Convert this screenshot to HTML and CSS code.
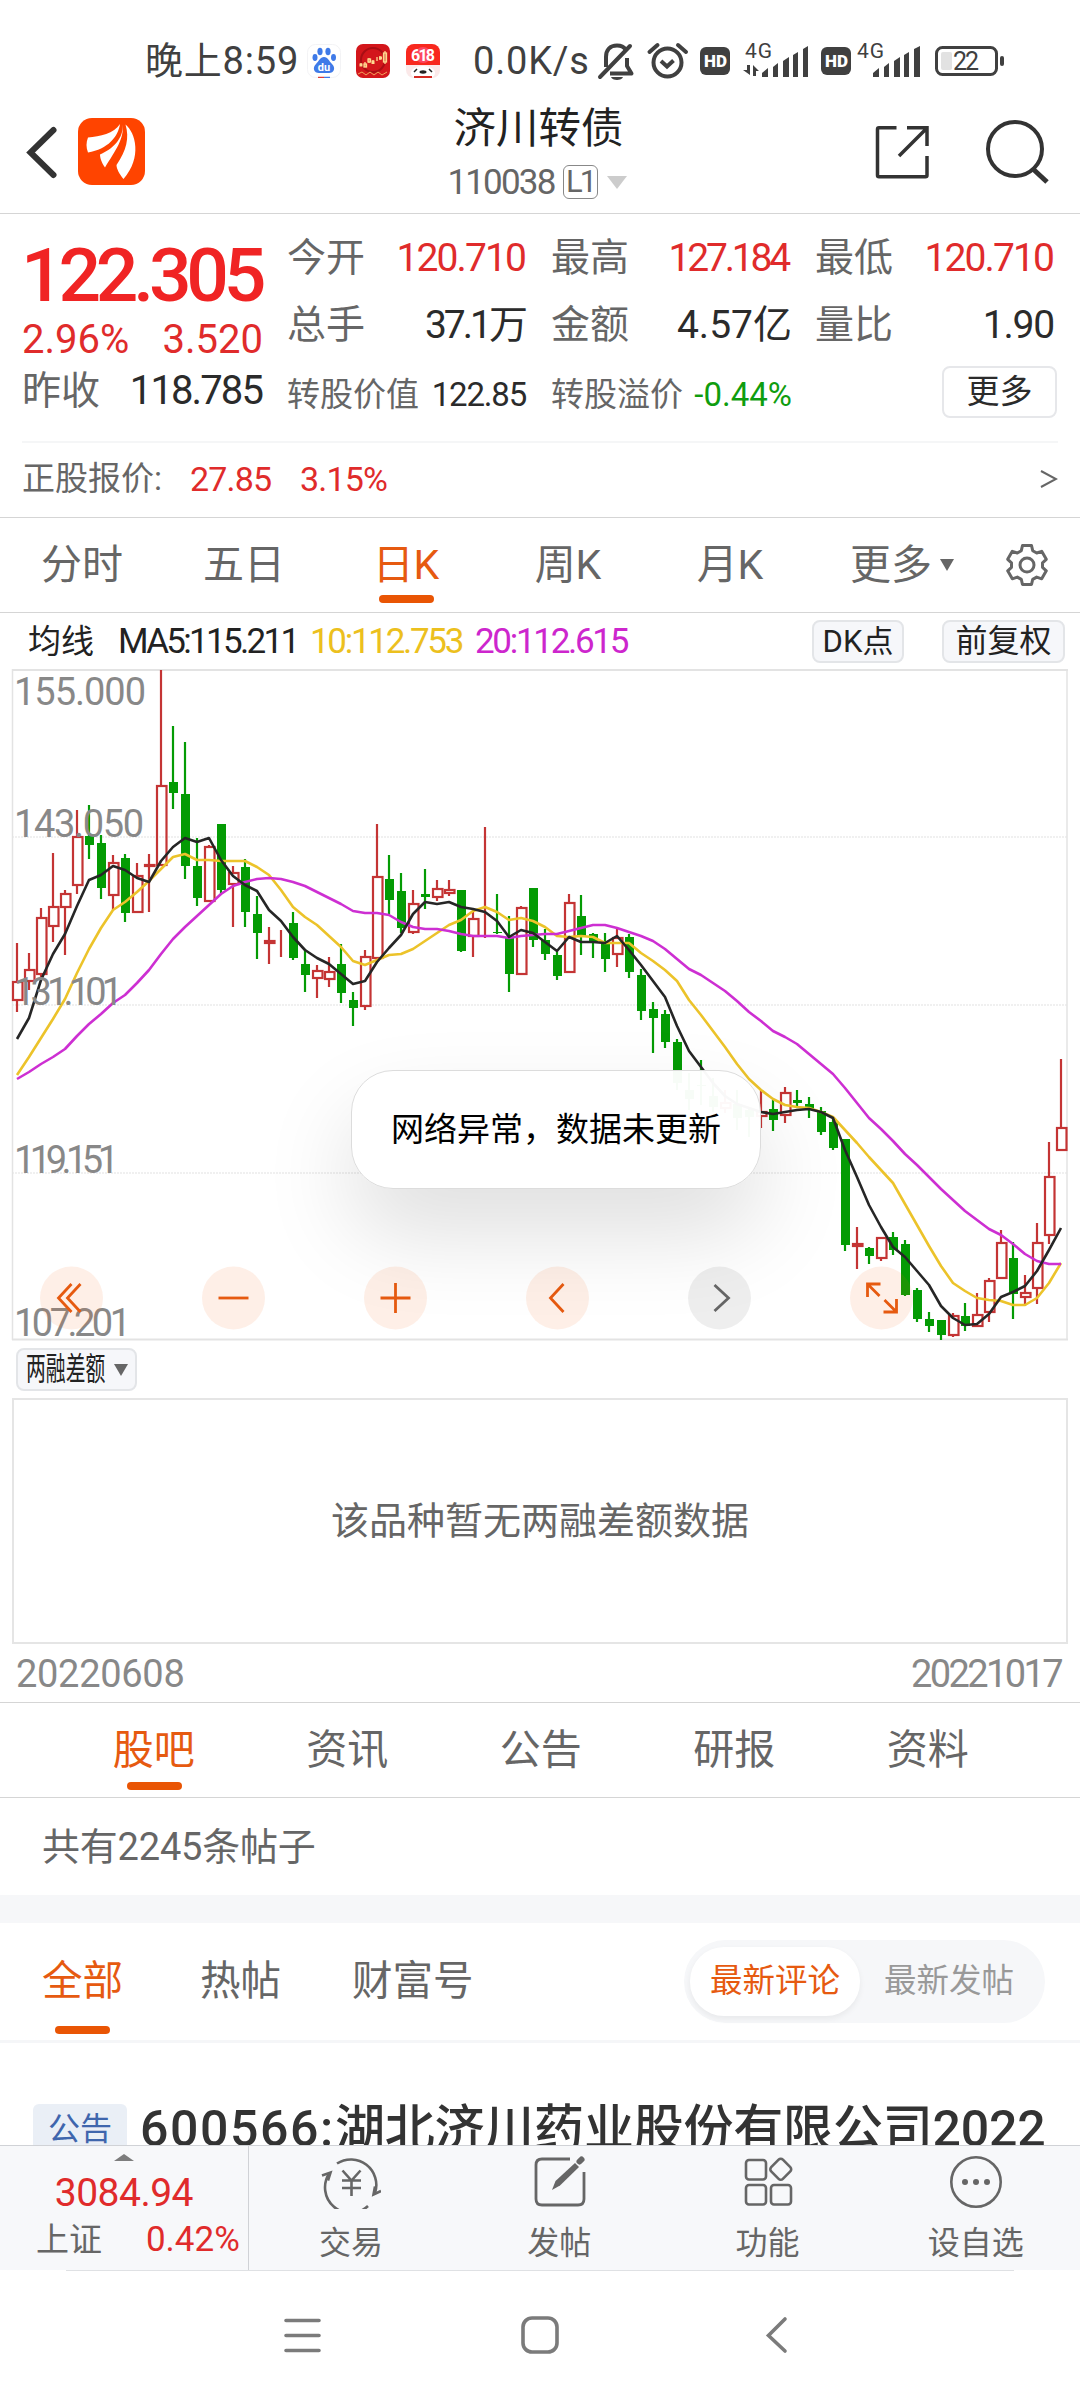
FILE: index.html
```html
<!DOCTYPE html>
<html lang="zh-CN">
<head>
<meta charset="utf-8">
<title>济川转债 110038</title>
<link rel="stylesheet" href="styles.css">
</head>
<body>
<div class="statusbar">
  <span class="clock">晚上8:59</span>
  <svg class="app-baidu" width="34" height="34" viewBox="0 0 34 34"><rect x=".5" y=".5" width="33" height="33" rx="8" fill="#fff" stroke="#f3f3f5"/><g fill="#3f7ae8"><ellipse cx="13" cy="7.500" rx="2.600" ry="3.700"/><ellipse cx="21" cy="7.500" rx="2.600" ry="3.700"/><ellipse cx="8" cy="13.500" rx="2.500" ry="3.400"/><ellipse cx="26.500" cy="13.500" rx="2.500" ry="3.400"/><path d="M17 13c4 0 5 4 8 7 4 4 2 9-3 9H12c-5 0-7-5-3-9 3-3 4-7 8-7z"/></g><text x="17" y="27" text-anchor="middle" font-size="11" font-weight="700" fill="#fff">du</text><path d="M11 33.500h6" stroke="#e03c35" stroke-width="1.500"/><path d="M17 33.500h6" stroke="#3f7ae8" stroke-width="1.500"/></svg>
  <svg class="app-stock" width="34" height="34" viewBox="0 0 34 34"><rect width="34" height="34" rx="7" fill="#d3161b"/><circle cx="17" cy="16" r="12" fill="none" stroke="#a90e14" stroke-width="2"/><g stroke="#ffd890" stroke-width="1.300" fill="none"><path d="M5 19v3M9 18v5M13 14v5M17 16v4M21 13v4M24 12v4M29 7v13"/><rect x="8" y="20" width="2.500" height="3"/><rect x="12" y="15" width="2.500" height="3"/><rect x="27.500" y="9" width="3" height="9"/></g><g fill="#ffd890"><rect x="3.500" y="19.500" width="3" height="3"/><rect x="15.500" y="16.500" width="3" height="3.500"/><rect x="23" y="12.500" width="3" height="3"/></g><path d="M2 30l4-2 4 3 4-3 4 3 4-3 4 3 5-3" stroke="#f2a25b" fill="none"/></svg>
  <svg class="app-618" width="34" height="34" viewBox="0 0 34 34"><rect width="34" height="34" rx="8" fill="#fbe9e9"/><path d="M8 0h18a8 8 0 0 1 8 8v13H0V8a8 8 0 0 1 8-8z" fill="#f8281e"/><circle cx="17" cy="11" r="8" fill="#ff5b8c" fill-opacity=".6"/><text x="17" y="17" text-anchor="middle" font-size="16" font-weight="700" fill="#fff" textLength="24">618</text><ellipse cx="17" cy="29" rx="12" ry="7" fill="#fff"/><path d="M8 28l3-3M26 28l-3-3" stroke="#222" stroke-width="1.500"/><ellipse cx="17" cy="28" rx="3.500" ry="1.700" fill="#222"/><path d="M8 32h18v2H8z" fill="#d42a22"/></svg>
  <span class="speed">0.0K/s</span>
  <svg class="status-icons" width="410" height="44" viewBox="596 38 410 44">
    <g fill="none" stroke="#404040" stroke-width="4">
      <path d="M606 66V56c0-7 4-11.500 11-11.500 4 0 7 1.500 8.500 4M627 57v8l4.500 7.500H610" stroke-linejoin="round"/>
      <path d="M600 76l30-31" stroke-linecap="round"/>
      <circle cx="667.500" cy="61.500" r="14"/>
      <path d="M661 60l6 5.500 6.500-6"/>
      <path d="M649.500 51l8-7M686 51l-8-7" stroke-linecap="round"/>
    </g>
    <path d="M611 76h12c-1 4-11 4-12 0z" fill="#404040"/>
    <g fill="#404040">
      <rect x="700" y="46" width="30" height="28" rx="6"/><rect x="821" y="46" width="30" height="28" rx="6"/>
      <path d="M747 64h3v10l-7-5h4zM753 75V64l6 6h-3v5z"/>
      <path d="M762 76v-4l6-5v9zM773 76V66l5-4v14zM783 76V60l6-4v20zM793 76V54l5-3v25zM803 76V48l5-3v31z"/>
      <path d="M873 76v-4l6-5v9zM884 76V66l5-4v14zM894 76V60l6-4v20zM904 76V54l5-3v25zM914 76V48l6-3v31z"/>
      <rect x="1000" y="55" width="4" height="10" rx="2"/>
    </g>
    <rect x="941" y="51" width="11" height="18" rx="2" fill="#e2e2e2"/>
    <rect x="936.500" y="46.500" width="60" height="27" rx="6" fill="none" stroke="#404040" stroke-width="3"/>
    <g font-size="17" font-weight="900" fill="#fff" text-anchor="middle"><text x="715.500" y="66">HD</text><text x="836.500" y="66">HD</text></g>
    <g font-size="21" fill="#404040"><text x="745" y="57" textLength="27">4G</text><text x="857" y="57" textLength="27">4G</text><text x="966" y="69" font-size="25" text-anchor="middle" textLength="26">22</text></g>
  </svg>
</div>

<header class="header">
  <svg class="back" width="32" height="56" viewBox="26 123 32 56"><path d="M53.500 129L30.500 151.500 53.500 174" fill="none" stroke="#333" stroke-width="6" stroke-linecap="round"/></svg>
  <svg class="logo" width="67" height="67" viewBox="78 119 67 67"><rect x="78" y="119" width="67" height="67" rx="14" fill="#ff4400"/><g fill="#fff"><path d="M120 125C118 138 108 150 88 153.500c-2-5-2-10 0-15 12-1 26-4 32-13.500z"/><path d="M122.500 125.500c2 14-7 26-17.500 43-2-3-5-8-5-13 12-5 24-16 22.500-30z"/><path d="M125.500 125.500c10 8 17 33-2 54.500-4-5-7-10-7-14 10-15 13-27 9-40.500z"/></g></svg>
  <div class="title">
    <div class="name">济川转债</div>
    <div class="code"><span class="num">110038</span><span class="level">L1</span><i class="caret"></i></div>
  </div>
  <svg class="share" width="56" height="56" viewBox="874 123 56 56"><g fill="none" stroke="#333" stroke-width="3.500"><path d="M896.500 126.800H879q-1.500 0-1.500 1.500v46q0 1.500 1.500 1.500h46.500q1.500 0 1.500-1.500V155M907 126.800h20V145M927 127l-28 28"/></g></svg>
  <svg class="search" width="66" height="66" viewBox="984 118 66 66"><g fill="none" stroke="#333" stroke-width="4"><circle cx="1015" cy="148" r="27"/><path d="M1033 168l14 13" stroke-width="5"/></g></svg>
</header>

<section class="quote">
  <div class="quote-main">
    <div class="price">122.305</div>
    <div class="pair red"><span>2.96%</span><span>3.520</span></div>
    <div class="pair prev"><span class="label">昨收</span><span class="ls2">118.785</span></div>
  </div>
  <div class="quote-grid">
    <div class="cell"><span class="label">今开</span><span class="red ls2">120.710</span></div>
    <div class="cell"><span class="label">最高</span><span class="red ls3">127.184</span></div>
    <div class="cell"><span class="label">最低</span><span class="red ls2">120.710</span></div>
    <div class="cell"><span class="label">总手</span><span class="vol">37.1<b>万</b></span></div>
    <div class="cell"><span class="label">金额</span><span>4.57亿</span></div>
    <div class="cell"><span class="label">量比</span><span class="ls1">1.90</span></div>
    <div class="cell small"><span class="label">转股价值</span><span class="ls1">122.85</span></div>
    <div class="cell small"><span class="label">转股溢价</span><span class="green">-0.44%</span></div>
    <div class="cell small"><span class="more">更多</span></div>
  </div>
</section>
<section class="stock">
  <span class="label">正股报价:</span><span class="red v1">27.85</span><span class="red v2">3.15%</span>
  <svg class="go" width="18" height="20" viewBox="0 0 18 20"><path d="M1 2l15 8-15 8" fill="none" stroke="#666" stroke-width="2"/></svg>
</section>

<nav class="tabs period">
  <span>分时</span><span>五日</span><span class="on">日K</span><span>周K</span><span>月K</span><span class="drop">更多<i></i></span>
  <svg width="44" height="44" viewBox="-22 -22 44 44"><g fill="none" stroke="#666" stroke-width="3"><circle r="7"/><path stroke-linejoin="round" d="M-4.500-19.500h9l1.200 5.200 4 2.300 5-1.700 4.600 8-3.800 3.500v4.500l3.800 3.500-4.600 8-5-1.700-4 2.300-1.200 5.100h-9l-1.200-5.100-4-2.300-5 1.700-4.600-8 3.800-3.500v-4.500l-3.800-3.500 4.600-8 5 1.700 4-2.300z"/></g></svg>
</nav>

<div class="ma">
  <span class="ma-name">均线</span><span class="ma5">MA5:115.211</span><span class="ma10">10:112.753</span><span class="ma20">20:112.615</span>
  <span class="chip dk">DK点</span><span class="chip adj">前复权</span>
</div>

<div class="chart">
  <svg id="kline" width="1056" height="672" viewBox="12 669 1056 672"></svg>
  <div class="toast">网络异常，数据未更新</div>
</div>

<div class="indicator"><span class="chip sub"><b>两融差额</b><i></i></span></div>
<div class="empty">该品种暂无两融差额数据</div>
<div class="dates"><span>20220608</span><span class="d2">20221017</span></div>

<nav class="tabs info"><span class="on">股吧</span><span>资讯</span><span>公告</span><span>研报</span><span>资料</span></nav>
<div class="count">共有2245条帖子</div>
<div class="filter">
  <span class="on">全部</span><span>热帖</span><span>财富号</span>
  <div class="switch"><span class="active">最新评论</span><span>最新发帖</span></div>
</div>
<article class="post"><span class="tag">公告</span><h2><span class="ticker">600566:</span>湖北济川药业股份有限公司2022</h2></article>

<footer class="toolbar">
  <div class="index"><i></i><div class="value">3084.94</div><div class="row"><span>上证</span><span class="red">0.42%</span></div></div>
  <div class="tool"><svg width="60" height="56" viewBox="321 2153 60 56"><g fill="none" stroke="#666" stroke-width="2.600"><path d="M337 2163.500a25.500 25.500 0 0 1 38 29.500M368 2206a25.500 25.500 0 0 1-38.500-33"/><path d="M322 2175.500l8.500-3-2.500 8M381 2191l-7.500 3.500 1.500-8" /><path d="M342.500 2170.500l9 10 9-10M351.500 2180v16M342 2180.500h19M342 2188h19"/></g></svg><span>交易</span></div>
  <div class="tool"><svg width="60" height="56" viewBox="529 2153 60 56"><path d="M570 2159h-28q-6 0-6 6v34q0 6 6 6h36q6 0 6-6v-27" fill="none" stroke="#666" stroke-width="2.800"/><path d="M552 2190l3.500-9 19.500-18 4 4-19 18.500z" fill="#666"/><path d="M579.500 2161.500l2-2" stroke="#666" stroke-width="6" stroke-linecap="round"/></svg><span>发帖</span></div>
  <div class="tool"><svg width="60" height="56" viewBox="738 2153 60 56"><g fill="none" stroke="#666" stroke-width="2.600"><rect x="746" y="2160" width="20" height="19.500" rx="3"/><rect x="746" y="2185" width="20" height="19.500" rx="3"/><rect x="771" y="2185" width="20" height="19.500" rx="3"/><rect x="772.500" y="2161" width="16.500" height="16.500" rx="3" transform="rotate(45 780.750 2169.250)"/></g></svg><span>功能</span></div>
  <div class="tool"><svg width="60" height="56" viewBox="946 2153 60 56"><circle cx="976" cy="2182" r="24.700" fill="none" stroke="#666" stroke-width="2.600"/><g fill="#666"><circle cx="965" cy="2182" r="3"/><circle cx="976" cy="2182" r="3"/><circle cx="987" cy="2182" r="3"/></g></svg><span>设自选</span></div>
</footer>
<div class="sysnav"><svg width="1080" height="130" viewBox="0 2270 1080 130"><path d="M66 2270.500h948" stroke="#dfe1e4"/><g fill="none" stroke="#7b7b7b" stroke-width="3.600" stroke-linecap="round"><path d="M286 2320.500h33M286 2335.500h33M286 2350.500h33"/><rect x="523" y="2318" width="34" height="34" rx="9"/><path d="M785 2319l-16.500 16.500 16.500 15.500"/></g></svg></div>
<script src="chart.js"></script>
</body>
</html>
```
FILE: styles.css
```css
* { box-sizing: border-box; }
body { margin: 0; width: 1080px; height: 2400px; overflow: hidden; background: #fff; color: #2b2b2b; font-family: Roboto, "Noto Sans CJK SC", sans-serif; line-height: 1; }
svg { display: block; flex: none; }
svg text { font-family: Roboto, "Noto Sans CJK SC", sans-serif; }
i { display: block; }
b { font-weight: 400; }
.red { color: #e02b2b; }
.green { color: #0f9d0f; }
.label { color: #666; }
.ls1 { letter-spacing: -1.2px; margin-right: 2px; }
.ls2 { letter-spacing: -1.9px; margin-right: 3px; }
.ls3 { letter-spacing: -3.2px; margin-right: 4px; }

.statusbar { height: 104px; padding: 18px 0 0 145px; display: flex; align-items: center; font-size: 38px; color: #404040; white-space: nowrap; }
.clock { width: 162px; letter-spacing: .8px; }
.app-stock { margin-left: 15px; }
.app-618 { margin-left: 16px; }
.speed { width: 123px; margin-left: 33px; letter-spacing: .8px; }

.header { height: 110px; border-bottom: 1px solid #d5d5d5; display: flex; align-items: center; padding: 0 30px 14px 26px; }
.logo { margin-left: 20px; }
.title { flex: 1; padding-left: 58px; margin-top: 5px; text-align: center; }
.name { font-size: 42.5px; line-height: 56px; color: #222; }
.code { height: 50px; display: flex; align-items: center; justify-content: center; font-size: 35px; color: #666; }
.code .num { letter-spacing: -1.8px; }
.level { margin-left: 8px; width: 35px; height: 34px; line-height: 32px; border: 1.500px solid #888; border-radius: 6px; text-align: center; font-size: 31px; letter-spacing: -3px; }
.caret { margin-left: 9px; margin-right: 3px; border: 10px solid transparent; border-top: 13px solid #ccc; border-bottom: 0; }
.search { margin-left: 54px; }

.quote { height: 227px; padding: 11px 24px 0 22px; display: flex; font-size: 39px; white-space: nowrap; }
.quote-main { width: 241px; padding-top: 10px; }
.price { font-size: 75px; line-height: 80px; font-weight: 500; letter-spacing: -5.2px; color: #f02424; margin-left: -1px; }
.pair { display: flex; justify-content: space-between; line-height: 50px; font-size: 40px; }
.pair .label { font-size: 39px; }
.pair .ls2 { margin-right: 1px; }
.pair.prev { line-height: 52px; }
.quote-grid { margin-left: 24px; display: grid; grid-template-columns: 241px 241px 241px; column-gap: 23px; grid-template-rows: 66px 68px 70px; }
.cell { display: flex; justify-content: space-between; align-items: center; }
.vol { letter-spacing: -3px; }
.vol b { letter-spacing: 0; }
.small { font-size: 33px; }
.more { margin: -4px -1px 0 auto; width: 115px; height: 52px; line-height: 48px; border: 2px solid #e6e7ea; border-radius: 8px; text-align: center; }
.stock { height: 76px; margin: 0 22px; border-top: 2px solid #f5f6f7; display: flex; align-items: center; padding-bottom: 3px; font-size: 34px; letter-spacing: -.8px; }
.stock .label { width: 168px; font-size: 33px; letter-spacing: 0; }
.v1 { width: 110px; }
.go { margin-left: auto; }

.tabs { height: 95px; border-top: 1px solid #d5d5d5; font-size: 41px; color: #666; display: flex; align-items: center; }
.tabs span { width: 162px; text-align: center; position: relative; line-height: 93px; }
.on { color: #e65a10; }
.tabs .on::after { content: ""; position: absolute; left: 50%; top: 76px; width: 55px; height: 8px; margin-left: -27px; border-radius: 4px; background: #e95504; }
.period { padding-left: 1px; }
.period .drop { width: 194px; display: flex; align-items: center; padding-left: 39px; }
.drop i { margin-left: 8px; border: 7px solid transparent; border-top: 12px solid #666; border-bottom: 0; }

.ma { height: 57px; border-top: 1px solid #d5d5d5; padding: 0 15px 0 28px; display: flex; align-items: center; font-size: 35px; color: #222; white-space: nowrap; }
.ma-name { font-size: 33px; width: 90px; }
.ma5 { width: 192px; letter-spacing: -2.700px; }
.ma10 { width: 165px; color: #ecc01e; letter-spacing: -2.300px; }
.ma20 { color: #cd26cd; letter-spacing: -2.3px; }
.chip { border: 2px solid #e3e5e8; border-radius: 8px; background: #f6f7fa; height: 43px; line-height: 39px; font-size: 32px; text-align: center; }
.dk { width: 92px; margin-left: auto; font-size: 31px; }
.adj { width: 123px; margin-left: 38px; }

.chart { position: relative; height: 672px; padding-left: 12px; }
#kline { overflow: visible; }
.toast { position: absolute; left: 351px; top: 401px; width: 410px; height: 119px; line-height: 118px; text-align: center; font-size: 33px; color: #000; background: rgba(255, 255, 255, .97); border: 1px solid #dcdcdc; border-radius: 42px; box-shadow: 0 44px 90px rgba(0, 0, 0, .13); }

.indicator { height: 57px; padding: 7px 0 0 16px; }
.sub { width: 121px; display: flex; align-items: center; padding-left: 8px; font-size: 32px; color: #222; }
.sub b { width: 128px; margin-right: -40px; transform: scaleX(.62); transform-origin: 0 50%; flex: none; }
.sub i { border: 7px solid transparent; border-top: 12px solid #666; border-bottom: 0; }
.empty { margin: 0 12px; width: 1056px; height: 246px; line-height: 242px; border: 2px solid #e5e5e5; text-align: center; font-size: 38px; color: #666; }
.dates { height: 58px; padding: 0 19px 0 16px; display: flex; justify-content: space-between; line-height: 60px; font-size: 38px; color: #888; }
.dates span { letter-spacing: -.3px; }
.dates .d2 { letter-spacing: -2.600px; }

.info { padding-left: 57px; border-bottom: 1px solid #d5d5d5; height: 96px; }
.info span { width: 193.500px; line-height: 95px; }
.info .on::after { top: 79px; }
.count { height: 97px; line-height: 98px; padding-left: 42px; font-size: 38px; letter-spacing: -.2px; color: #666; }
.filter { height: 148px; border-top: 28px solid #f6f7f9; border-bottom: 3px solid #f5f6f8; padding: 0 35px 0 42px; display: flex; align-items: center; font-size: 40.5px; color: #666; }
.filter > span { position: relative; width: 158px; line-height: 117px; }
.filter > span:nth-child(2) { width: 152px; }
.filter > .on::after { content: ""; position: absolute; left: 13px; top: 103px; width: 55px; height: 8px; border-radius: 4px; background: #e95504; }
.switch { margin-left: auto; width: 361px; height: 83px; border-radius: 42px; background: #f6f7f9; padding: 7px 7px 7px 6px; display: flex; font-size: 32.5px; color: #999; line-height: 68px; text-align: center; }
.switch span { flex: 1; }
.switch .active { background: #fff; border-radius: 34px; flex: 0 0 170px; color: #e65a10; box-shadow: 0 3px 6px rgba(0, 0, 0, .06); }
.post { height: 102px; padding: 61px 0 0 33px; display: flex; align-items: flex-start; overflow: hidden; white-space: nowrap; }
.tag { width: 94px; height: 50px; line-height: 50px; border-radius: 6px; background: #eaeff6; color: #3f66ad; text-align: center; font-size: 32px; }
.post h2 { margin: 0 0 0 13px; font-size: 50px; line-height: 50px; font-weight: 500; letter-spacing: -.2px; color: #333; }
.ticker { letter-spacing: 1.6px; }

.toolbar { height: 125px; background: #f7f8fa; border-top: 1px solid #d0d2d6; display: flex; position: relative; color: #666; font-size: 32px; }
.index { width: 249px; border-right: 1px solid #d0d2d6; padding-top: 8px; }
.index i { width: 20px; margin-left: 114px; border: 10px solid transparent; border-bottom: 7px solid #7d7d7d; border-top: 0; }
.value { height: 61px; line-height: 64px; text-align: center; font-size: 39px; letter-spacing: -.5px; color: #e02b2b; }
.row { display: flex; justify-content: space-between; padding: 0 8px 0 36px; line-height: 36px; font-size: 33px; }
.row .red { font-size: 35px; }
.tool { width: 208.500px; display: flex; flex-direction: column; align-items: center; padding-top: 7px; }
.tool span { margin-top: 18px; white-space: nowrap; }
.tool:nth-child(2) { margin-left: -2px; }
.sysnav { height: 130px; }
```
FILE: chart.js
```js
// Each candle: direction, high, body top, body bottom, low (in chart y units).
const candles = `
R 943 982 1000 1012|R 953 970 981 990|R 908 918 974 977|R 853 907 926 942|R 890 894 907 955|R 810 837 885 894|G 805 836 845 859|G 835 843 888 899
R 855 863 895 910|G 854 858 913 922|R 863 876 912 912|R 854 865 866 912|R 670 786 865 865|G 726 782 793 809|G 742 794 866 879|G 838 866 898 906
R 845 847 901 901|G 824 824 890 894|R 866 873 884 927|G 859 867 912 927|G 896 914 933 959|R 927 941 943 964|R 930 941 941 957|G 912 923 958 960
G 949 964 975 992|R 965 971 978 998|R 957 972 979 987|G 944 964 993 1003|G 992 1000 1008 1026|R 950 957 1006 1010|R 824 877 958 960|G 855 879 900 914
G 873 891 928 933|R 890 904 932 934|G 869 894 897 909|R 880 889 897 901|R 880 890 893 896|G 890 890 951 952|R 912 919 936 957|R 827 910 910 938
G 894 932 933 934|G 916 937 974 992|R 906 908 974 974|G 888 888 940 947|G 929 940 954 960|G 952 955 976 980|R 894 903 972 972|G 895 916 936 955
G 933 934 943 958|G 933 942 959 972|R 929 938 954 967|G 934 937 972 978|G 969 975 1011 1020|G 1002 1009 1018 1053|G 1010 1014 1042 1048|G 1039 1042 1083 1090
G 1073 1090 1099 1110|G 1060 1085 1086 1105|G 1078 1096 1107 1112|R 1090 1103 1108 1113|G 1090 1104 1118 1130|G 1108 1110 1117 1137|R 1090 1112 1116 1128|G 1100 1109 1120 1131
R 1087 1093 1115 1123|G 1090 1100 1103 1106|G 1097 1104 1110 1118|G 1107 1111 1132 1135|G 1117 1122 1148 1150|G 1139 1139 1245 1251|R 1227 1244 1246 1269|G 1247 1248 1256 1264
R 1237 1238 1258 1261|G 1232 1237 1250 1255|G 1240 1244 1295 1296|G 1288 1290 1319 1322|G 1312 1319 1326 1332|G 1320 1320 1335 1340|R 1313 1316 1335 1337|G 1303 1316 1326 1331
R 1293 1315 1326 1326|R 1278 1281 1312 1322|R 1230 1243 1278 1278|G 1242 1258 1294 1319|R 1275 1293 1297 1306|R 1223 1243 1288 1304|R 1142 1177 1235 1244|R 1059 1128 1150 1150`
  .trim().split(/[|\n]/).map(s => s.split(' '));

const lines = {
  '#ecc32a': '1075 1057 1038 1019 999 973 949 928 910 902 892 881 869 857 854 860 860 861 861 861 867 875 890 907 917 925 936 947 961 965 960 955 954 949 941 933 925 920 911 907 912 920 918 921 927 936 937 936 937 943 943 943 953 961 970 981 1000 1015 1031 1047 1064 1079 1090 1099 1105 1107 1108 1112 1117 1130 1143 1157 1170 1183 1204 1225 1246 1266 1283 1291 1298 1300 1301 1305 1305 1298 1283 1263',
  '#cd2fd2': '1079 1072 1064 1057 1049 1036 1024 1014 1003 995 983 970 954 939 927 916 905 894 886 882 879 878 879 882 886 892 898 904 911 913 913 915 922 927 929 929 931 934 936 936 936 938 936 935 934 934 931 928 925 925 928 932 936 941 949 959 969 975 983 991 1001 1012 1021 1031 1037 1044 1054 1064 1074 1088 1103 1118 1129 1141 1154 1165 1177 1189 1200 1211 1220 1229 1235 1244 1254 1261 1264 1264',
  '#262626': '1039 1018 980 954 934 906 880 875 866 870 878 882 861 847 838 842 838 860 876 885 891 910 921 937 950 958 964 974 984 981 962 948 935 914 902 904 902 907 909 912 921 937 930 933 942 951 937 942 942 943 936 950 965 981 997 1026 1051 1067 1083 1096 1104 1108 1112 1114 1112 1110 1109 1112 1118 1150 1177 1205 1227 1247 1257 1271 1285 1306 1318 1325 1324 1314 1297 1292 1286 1271 1250 1228'
};

const RED = '#c43434', GREEN = '#049b04';
const xAt = i => 17 + 12 * i;
let out = '<path d="M12 837H1067M12 1005H1067M12 1173H1067" stroke="#ebebeb" stroke-width="1.5" stroke-dasharray="2 1"/>';
out += '<path d="M12.5 669V1340M1067 669V1340" stroke="#e3e3e3" stroke-width="1.5"/><path d="M12 670H1068M12 1339.500H1068" stroke="#e3e3e3" stroke-width="2"/>';

candles.forEach(([dir, ...v], i) => {
  const x = xAt(i), [high, top, bottom, low] = v.map(Number);
  if (dir === 'G') {
    out += `<path d="M${x} ${high}V${low}" stroke="${GREEN}" stroke-width="2.2"/><rect x="${x - 4}" y="${top}" width="9" height="${Math.max(1, bottom - top)}" fill="${GREEN}"/>`;
  } else {
    out += `<path d="M${x} ${high}V${top}M${x} ${bottom}V${low}" stroke="${RED}" stroke-width="2.2"/><rect x="${x - 4}" y="${top}" width="9.5" height="${bottom - top}" fill="none" stroke="${RED}" stroke-width="2.2"/>`;
  }
});
for (const [color, ys] of Object.entries(lines)) {
  out += `<polyline fill="none" stroke="${color}" stroke-width="2.6" stroke-linejoin="round" points="${ys.split(' ').map((y, i) => xAt(i) + ',' + y).join(' ')}"/>`;
}

// Price scale: label, baseline, width.
[['155.000', 705, 132], ['143.050', 837, 130], ['131.101', 1005, 109], ['119.151', 1173, 105], ['107.201', 1336, 117]].forEach(([t, y, w]) => {
  out += `<text x="14" y="${y}" font-size="38" fill="#888" textLength="${w}">${t}</text>`;
});

// Zoom and pan controls.
const glyphs = [
  [71.5, 'M0-14l-13 14 13 14M9-14l-13 14 13 14'], [233.5, 'M-15 0h30'], [395.5, 'M-15 0h30M0-15v30'],
  [557.5, 'M6-14l-13 14 13 14'], [719.5, 'M-5-13l14 13-14 13'], [881.5, 'M-14-1v-13h13M-14-14l12 12M15 1v13h-13M15 14l-12-12']
];
glyphs.forEach(([x, d], i) => {
  const gray = i === 4;
  out += `<g transform="translate(${x} 1298)"><circle r="31.5" fill="${gray ? '#000' : '#fa6414'}" fill-opacity="${gray ? .065 : .1}"/><path d="${d}" fill="none" stroke="${gray ? '#666' : '#e65a10'}" stroke-width="2.8"/></g>`;
});
document.getElementById('kline').innerHTML = out;
```
